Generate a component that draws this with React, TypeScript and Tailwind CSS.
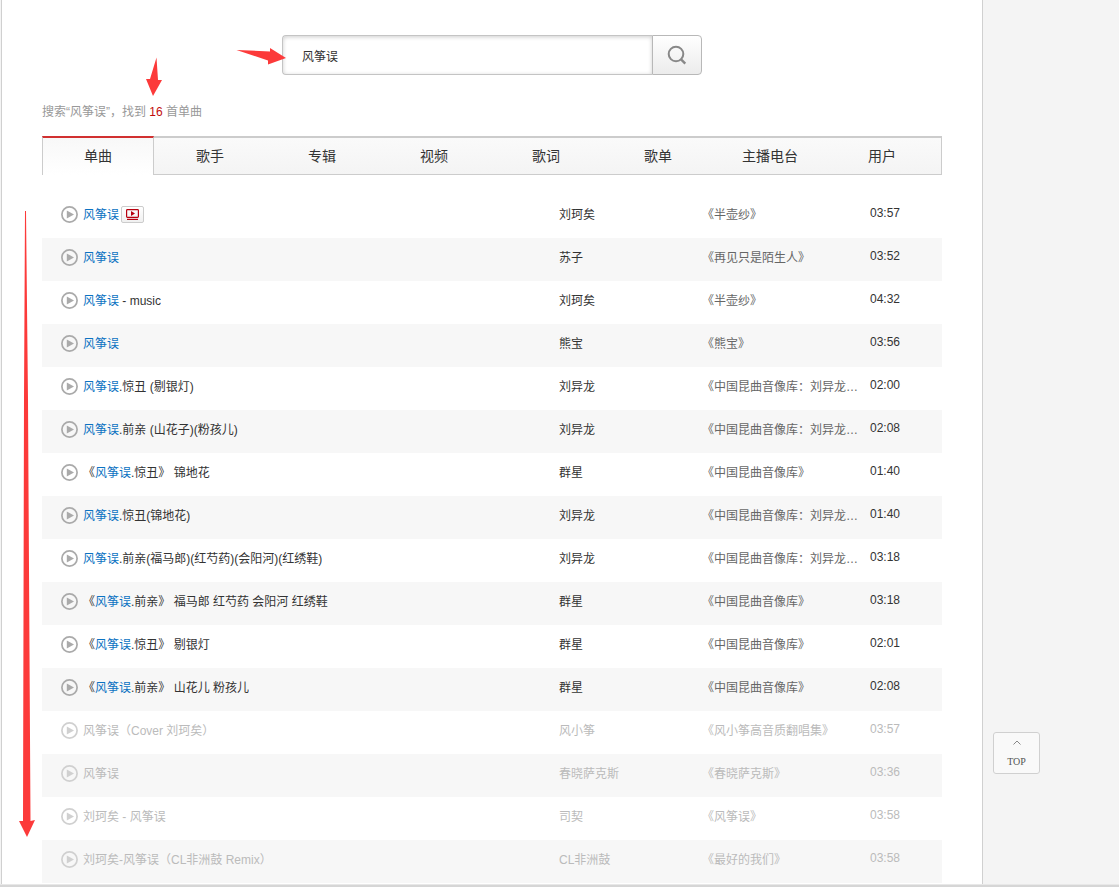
import React, { useState } from "react";

const KEYWORD = "风筝误";

const TABS = ["单曲", "歌手", "专辑", "视频", "歌词", "歌单", "主播电台", "用户"];

type Song = {
  title: string;
  artist: string;
  album: string;
  time: string;
  mv?: boolean;
  off?: boolean;
};

const SONGS: Song[] = [
  { title: "风筝误", artist: "刘珂矣", album: "《半壶纱》", time: "03:57", mv: true },
  { title: "风筝误", artist: "苏子", album: "《再见只是陌生人》", time: "03:52" },
  { title: "风筝误 - music", artist: "刘珂矣", album: "《半壶纱》", time: "04:32" },
  { title: "风筝误", artist: "熊宝", album: "《熊宝》", time: "03:56" },
  { title: "风筝误.惊丑 (剔银灯)", artist: "刘异龙", album: "《中国昆曲音像库：刘异龙…", time: "02:00" },
  { title: "风筝误.前亲 (山花子)(粉孩儿)", artist: "刘异龙", album: "《中国昆曲音像库：刘异龙…", time: "02:08" },
  { title: "《风筝误.惊丑》 锦地花", artist: "群星", album: "《中国昆曲音像库》", time: "01:40" },
  { title: "风筝误.惊丑(锦地花)", artist: "刘异龙", album: "《中国昆曲音像库：刘异龙…", time: "01:40" },
  { title: "风筝误.前亲(福马郎)(红芍药)(会阳河)(红绣鞋)", artist: "刘异龙", album: "《中国昆曲音像库：刘异龙…", time: "03:18" },
  { title: "《风筝误.前亲》 福马郎 红芍药 会阳河 红绣鞋", artist: "群星", album: "《中国昆曲音像库》", time: "03:18" },
  { title: "《风筝误.惊丑》 剔银灯", artist: "群星", album: "《中国昆曲音像库》", time: "02:01" },
  { title: "《风筝误.前亲》 山花儿 粉孩儿", artist: "群星", album: "《中国昆曲音像库》", time: "02:08" },
  { title: "风筝误（Cover 刘珂矣）", artist: "风小筝", album: "《风小筝高音质翻唱集》", time: "03:57", off: true },
  { title: "风筝误", artist: "春晓萨克斯", album: "《春晓萨克斯》", time: "03:36", off: true },
  { title: "刘珂矣 - 风筝误", artist: "司契", album: "《风筝误》", time: "03:58", off: true },
  { title: "刘珂矣-风筝误（CL非洲鼓 Remix）", artist: "CL非洲鼓", album: "《最好的我们》", time: "03:58", off: true },
];

function Title({ song }: { song: Song }) {
  if (song.off) return <>{song.title}</>;
  const [before, after] = song.title.split(KEYWORD);
  return (
    <>
      {before}
      <span className="text-[#0c73c2]">{KEYWORD}</span>
      {after}
    </>
  );
}

function PlayIcon() {
  return (
    <svg viewBox="0 0 17 17" className="block size-[17px]" aria-hidden="true">
      <circle cx="8.5" cy="8.5" r="7.6" fill="none" stroke="currentColor" strokeWidth="1.7" />
      <path d="M5.8 4.4v8.2l7.2-4.1z" fill="currentColor" />
    </svg>
  );
}

function SongRow({ song }: { song: Song }) {
  return (
    <tr className={song.off ? "h-[43px] align-top text-[#bbb] even:bg-[#f7f7f7]" : "h-[43px] align-top even:bg-[#f7f7f7]"}>
      <td className="pt-[11px] pl-[19px]">
        <button type="button" aria-label={"播放 " + song.title} className={song.off ? "block text-[#d0d0d0]" : "block text-[#aaa]"}>
          <PlayIcon />
        </button>
      </td>
      <td className="pt-[11px]">
        <div className="flex items-start gap-0.5">
          <a href="#song" className="truncate whitespace-pre">
            <Title song={song} />
          </a>
          {song.mv && (
            <button type="button" aria-label="播放mv" className="flex h-[17px] w-[23px] items-center justify-center rounded-[2px] border border-[#ccc] bg-linear-to-b from-white to-[#f0f0f0]">
              <svg viewBox="0 0 13 11" className="h-[11px] w-[13px]" aria-hidden="true">
                <rect x="0.6" y="0.6" width="11.8" height="7.8" rx="0.8" fill="none" stroke="#b8000f" strokeWidth="1.2" />
                <path d="M5 2v5l4-2.5z" fill="#b8000f" />
                <path d="M1 10.4h11" stroke="#b8000f" strokeWidth="1.2" />
              </svg>
            </button>
          )}
        </div>
      </td>
      <td className="pt-[11px]">
        <a href="#artist">{song.artist}</a>
      </td>
      <td className="pt-[11px]">
        <a href="#album" className={song.off ? "block truncate" : "block truncate text-[#666]"}>
          {song.album}
        </a>
      </td>
      <td className="pt-[9px]">{song.time}</td>
    </tr>
  );
}

function Arrows() {
  return (
    <svg viewBox="0 0 300 850" className="pointer-events-none absolute top-0 left-0 h-[850px] w-[300px]" fill="#fc3a3a" aria-hidden="true">
      <path d="M236.500 50L270 51.500V48L286 58L268 64.500V60.500Z" />
      <path d="M156.500 57.500L158 80H162L153 96L146 79H150Z" />
      <path d="M25 211H26L28 400L30.500 821L35 820L27 837L19 821H23L24 400Z" />
    </svg>
  );
}

export default function App() {
  const [query, setQuery] = useState(KEYWORD);
  const [active, setActive] = useState(0);

  return (
    <div className="relative flex min-h-screen flex-col bg-[#f4f4f4] font-['Liberation_Sans','Noto_Sans_CJK_SC',sans-serif] text-xs leading-[18px] text-[#333]">
      <div className="flex flex-1 pl-px">
        <main className="min-w-0 flex-1 border-x border-[#d0d0d0] bg-white px-10">
          <form className="mx-auto mt-[35px] flex h-10 w-[420px]" onSubmit={(e) => e.preventDefault()}>
            <input
              aria-label="搜索"
              value={query}
              onChange={(e) => setQuery(e.target.value)}
              className="min-w-0 flex-1 rounded-l border border-r-0 border-[#c4c4c4] bg-white px-[19px] pt-[3px] inset-shadow-[0_1px_4px_#00000033] outline-none"
            />
            <button type="submit" aria-label="搜索" className="flex w-[50px] items-center justify-center rounded-r border border-[#b8b8b8] bg-linear-to-b from-white to-[#ececec] text-[#888]">
              <svg viewBox="0 0 20 20" className="size-5" fill="none" stroke="currentColor" strokeWidth="2" aria-hidden="true">
                <circle cx="9" cy="9" r="7.300" />
                <path d="M13.500 13.800l4.800 4.800" strokeWidth="2.400" />
              </svg>
            </button>
          </form>

          <p className="mt-7 text-[#999]">
            搜索“{KEYWORD}”，找到 <em className="text-[#c20c0c] not-italic">16</em> 首单曲
          </p>

          <nav className="mt-[15px] flex h-[39px] text-sm">
            {TABS.map((tab, i) => (
              <a
                key={tab}
                href={"#tab" + i}
                onClick={() => setActive(i)}
                className={
                  i === active
                    ? "flex w-28 items-center justify-center border-x border-t-2 border-x-[#ccc] border-t-[#d13030] bg-linear-to-b from-[#f8f8f8] to-white pb-px"
                    : "flex w-28 items-center justify-center border-t-2 border-b border-[#ccc] bg-linear-to-b from-[#fafafa] to-[#f4f4f4]"
                }
              >
                {tab}
              </a>
            ))}
            <span className="flex-1 border-t-2 border-r border-b border-[#ccc] bg-linear-to-b from-[#fafafa] to-[#f4f4f4]" />
          </nav>

          <table className="mt-5 w-full table-fixed">
            <colgroup>
              <col className="w-[41px]" />
              <col />
              <col className="w-[143px]" />
              <col className="w-[168px]" />
              <col className="w-[72px]" />
            </colgroup>
            <tbody>
              {SONGS.map((song, i) => (
                <SongRow key={i} song={song} />
              ))}
            </tbody>
          </table>
        </main>
        <aside className="w-[136px]" />
      </div>
      <footer className="h-[3px] border-t border-[#e8e8e8] bg-[#d6d6d6]" />

      <a
        href="#top"
        className="fixed right-[79px] bottom-[113px] flex h-[42px] w-[47px] flex-col items-center justify-between rounded-[3px] border border-[#d0d0d0] bg-[#f9f9f9] pt-[7px] pb-0.5 font-['Liberation_Serif',serif] text-[10px] text-[#555]"
      >
        <svg viewBox="0 0 8 5" className="h-[5px] w-2" fill="none" stroke="#888" aria-hidden="true">
          <path d="M0.500 4.500L4 1l3.500 3.500" />
        </svg>
        TOP
      </a>
      <Arrows />
    </div>
  );
}
